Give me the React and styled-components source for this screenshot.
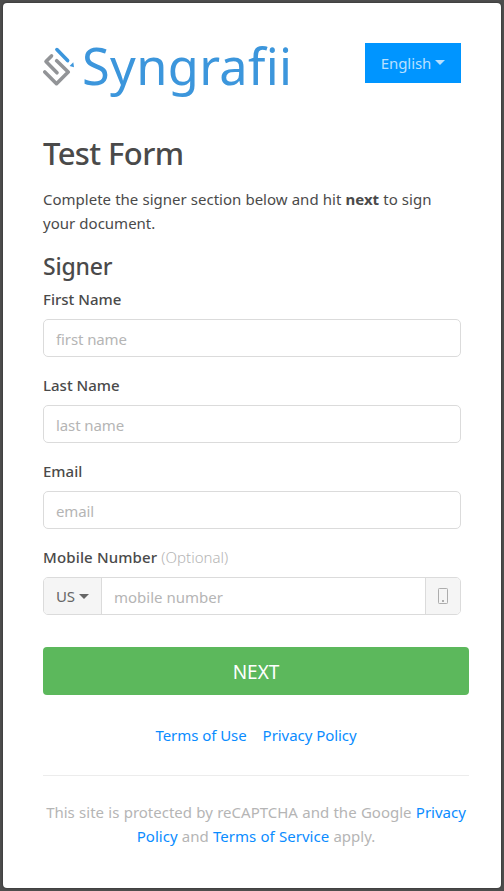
import React from 'react'
import styled, { createGlobalStyle } from 'styled-components'

const App = () => {
  return (
    <>
      <GlobalStyle />
      <Card>
        <Header>
          <Brand>
            <LogoMark />
            <Wordmark>Syngrafii</Wordmark>
          </Brand>
          <LanguageButton type="button">
            English
            <Caret />
          </LanguageButton>
        </Header>

        <Title>Test Form</Title>
        <Intro>
          Complete the signer section below and hit <strong>next</strong> to sign<br />
          your document.
        </Intro>

        <SectionTitle>Signer</SectionTitle>
        <Field label="First Name" name="firstName" placeholder="first name" />
        <Field label="Last Name" name="lastName" placeholder="last name" />
        <Field label="Email" name="email" placeholder="email" />

        <MobileLabel htmlFor="mobile">
          Mobile Number <Optional>(Optional)</Optional>
        </MobileLabel>
        <InputGroup>
          <CountryButton type="button">
            US
            <Caret />
          </CountryButton>
          <GroupInput id="mobile" placeholder="mobile number" />
          <Addon>
            <PhoneIcon />
          </Addon>
        </InputGroup>

        <NextButton type="button">NEXT</NextButton>

        <Links>
          <a href="#terms">Terms of Use</a>
          <a href="#privacy">Privacy Policy</a>
        </Links>

        <Footer>
          This site is protected by reCAPTCHA and the Google <a href="#g-privacy">Privacy<br />
          Policy</a> and <a href="#g-terms">Terms of Service</a> apply.
        </Footer>
      </Card>
    </>
  )
}

export default App

const Field = ({ label, name, placeholder }) => (
  <FieldStyle>
    <Label htmlFor={name}>{label}</Label>
    <Input id={name} placeholder={placeholder} />
  </FieldStyle>
)

const LogoMark = () => (
  <svg width="32" height="64" viewBox="0 0 32 64" aria-hidden="true">
    <g fill="none" strokeWidth="3.6" strokeLinecap="round" strokeLinejoin="round">
      <path stroke="#929497" d="M8.5 12.9L3 18.5L14 29.8" />
      <path stroke="#929497" d="M1.8 29L13.5 40.7L25.2 29L13.7 17.7" />
      <path stroke="#3c96dc" d="M13.9 6.6L24.6 17.6" />
    </g>
    <path fill="#3c96dc" d="M30.3 19.3L31 24.2L26.6 23Z" />
  </svg>
)

const PhoneIcon = () => (
  <svg width="10" height="16" viewBox="0 0 10 16" fill="none">
    <rect x="0.5" y="0.5" width="9" height="15" rx="0.8" stroke="#adadad" />
    <rect x="4" y="12" width="2" height="2" fill="#adadad" />
  </svg>
)

const GlobalStyle = createGlobalStyle`
    * {
        box-sizing: border-box;
    }

    body {
        margin: 0;
        padding: 3px;
        background-color: #4d4d4d;
        color: #4a4a4a;
        font-family: 'Noto Sans', 'Open Sans', sans-serif;
        font-size: 15px;
        line-height: 24px;
    }

    a {
        color: #0a8cff;
        text-decoration: none;
    }

    button, input {
        font: inherit;
        letter-spacing: inherit;
    }
`

const Card = styled.main`
    display: flex;
    flex-direction: column;
    height: 885px;
    padding: 40px 32px 0 40px;
    border-radius: 4px;
    background-color: #fff;
    box-shadow: 0 0 2px #222;
`

const Header = styled.header`
    display: flex;
    justify-content: space-between;
    align-items: flex-start;
    height: 64px;
    margin-right: 8px;
`

const Brand = styled.div`
    display: flex;
    gap: 7px;
`

const Wordmark = styled.span`
    margin-top: -12px;
    color: #3c96dc;
    font-size: 50.5px;
    line-height: 70px;
    letter-spacing: 0.35px;
`

const Caret = styled.span`
    width: 0;
    margin-left: 4px;
    border-top: 5px solid currentColor;
    border-left: 5px solid transparent;
    border-right: 5px solid transparent;
`

const LanguageButton = styled.button`
    display: flex;
    align-items: center;
    justify-content: center;
    width: 96px;
    height: 40px;
    padding: 0;
    border: 0;
    background-color: #0095ff;
    color: #b8e0ff;
    letter-spacing: -0.1px;

    ${Caret} {
        margin-bottom: 2px;
    }
`

const Title = styled.h1`
    margin: 27px 0 0;
    font-size: 31px;
    font-weight: 500;
    line-height: 38px;
    letter-spacing: -0.6px;
`

const Intro = styled.p`
    margin: 15px 0 0;
    word-spacing: 0.25px;
`

const SectionTitle = styled.h2`
    margin: 16px 0 0;
    font-size: 23px;
    font-weight: 500;
    line-height: 30px;
    letter-spacing: -0.2px;
`

const FieldStyle = styled.div`
    height: 86px;

    ${SectionTitle} + & {
        margin-top: 1px;
    }
`

const Label = styled.label`
    display: block;
    margin: 5px 0 8px;
    font-weight: 500;
`

const MobileLabel = styled(Label)`
    letter-spacing: 0.15px;
`

const Optional = styled.span`
    color: #b5b5b5;
    font-weight: 300;
    letter-spacing: 0;
`

const Input = styled.input`
    display: block;
    width: 418px;
    height: 38px;
    padding: 2px 12px 0;
    border: 1px solid #dbdbdb;
    border-radius: 5px;
    background-color: #fff;
    color: #4a4a4a;
    letter-spacing: -0.1px;

    &::placeholder {
        color: #b5b5b5;
        opacity: 1;
    }
`

const InputGroup = styled.div`
    display: flex;
    width: 418px;
    height: 38px;
    overflow: hidden;
    border: 1px solid #dbdbdb;
    border-radius: 5px;
`

const CountryButton = styled.button`
    display: flex;
    align-items: center;
    width: 57px;
    padding: 0 0 0 12px;
    border: 0;
    background-color: #f5f5f5;
    color: #666;
    letter-spacing: -0.2px;
`

const GroupInput = styled(Input)`
    flex: 1;
    min-width: 0;
    height: 36px;
    border-width: 0 1px;
    border-radius: 0;
    letter-spacing: 0;
`

const Addon = styled.span`
    display: flex;
    align-items: center;
    justify-content: center;
    width: 34px;
    background-color: #f5f5f5;
`

const NextButton = styled.button`
    height: 48px;
    flex-shrink: 0;
    margin-top: 32px;
    padding: 2px 0 0;
    border: 0;
    border-radius: 4px;
    background-color: #5cb85c;
    color: #fff;
    font-size: 19px;
`

const Links = styled.nav`
    display: flex;
    justify-content: center;
    gap: 16px;
    margin-top: 28px;
    letter-spacing: -0.05px;
`

const Footer = styled.footer`
    margin-top: 28px;
    padding-top: 24px;
    border-top: 1px solid #ececec;
    color: #b5b5b5;
    text-align: center;
    word-spacing: 0.4px;
`
